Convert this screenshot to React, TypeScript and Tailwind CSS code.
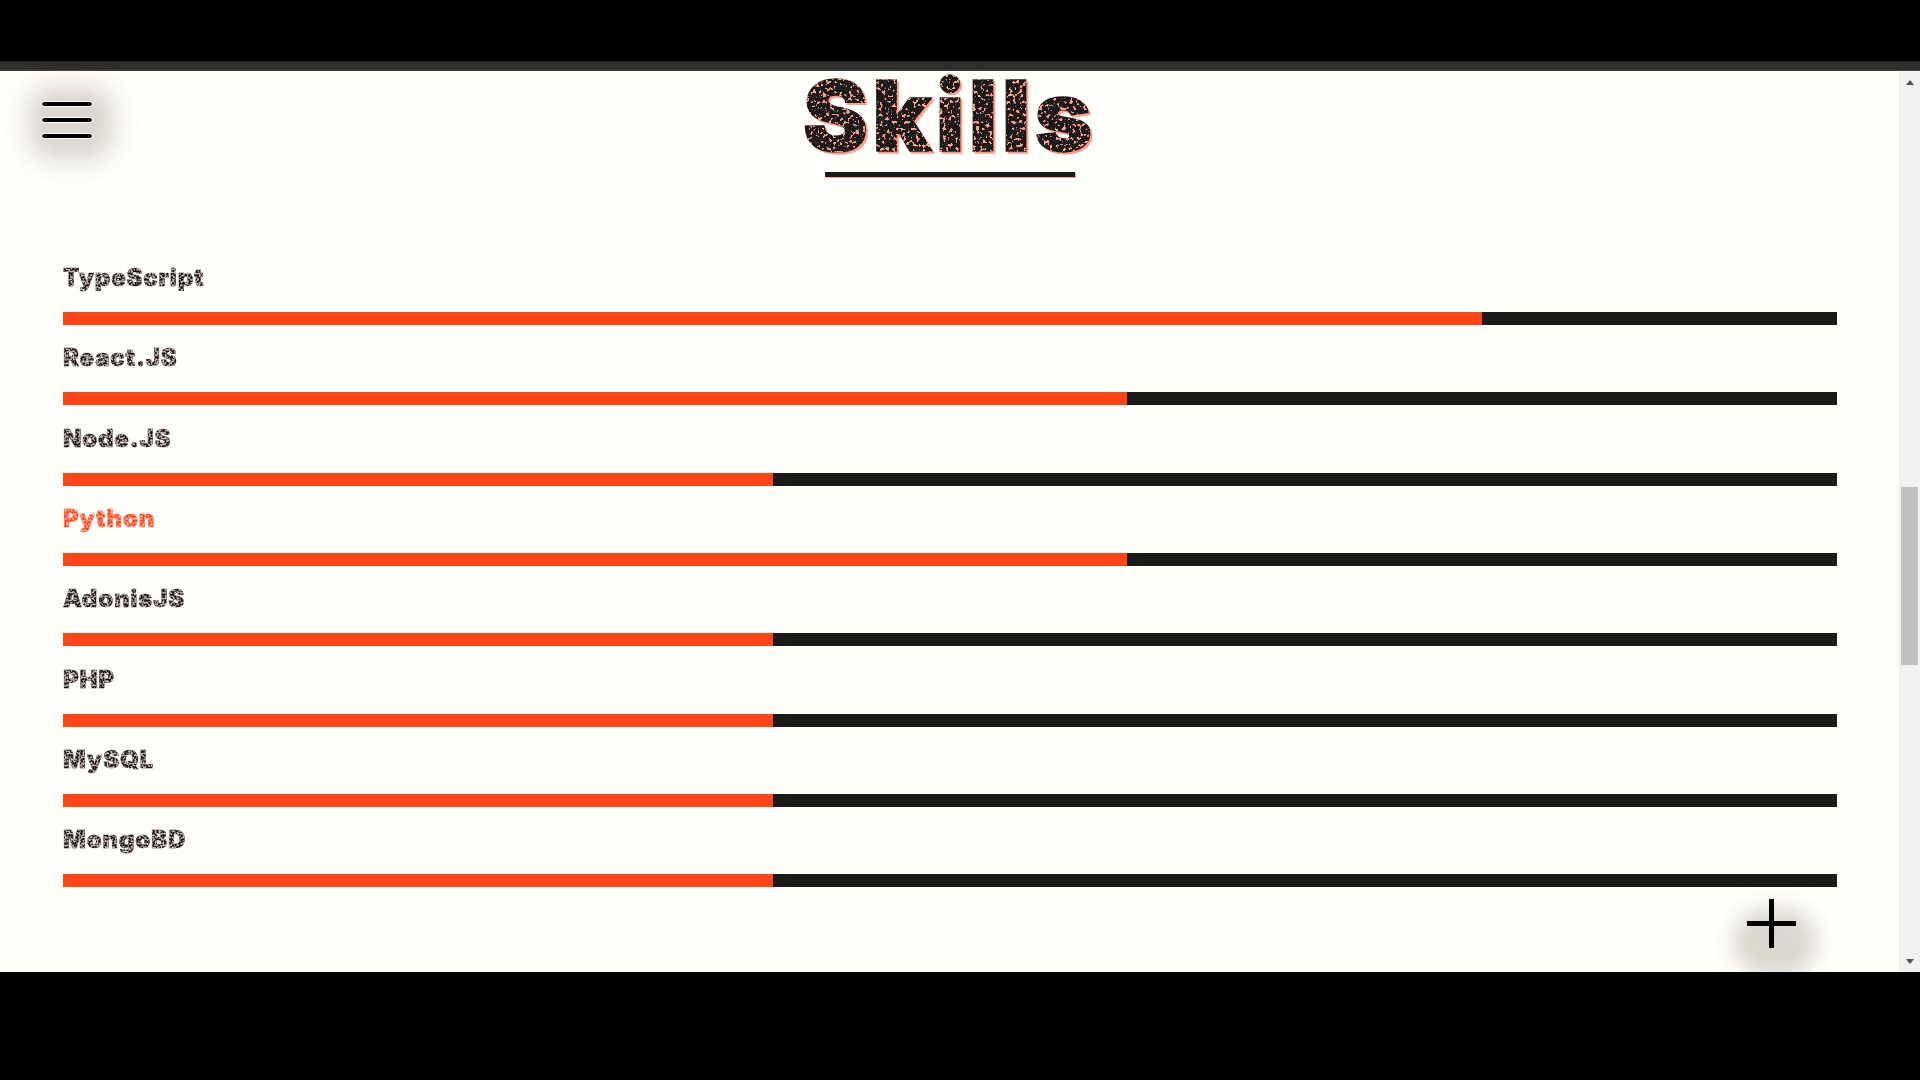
import React from 'react'

type Skill = {
  name: string;
  level: number;
  active?: boolean;
}

const skills: Skill[] = [
  { name: 'TypeScript', level: 80 },
  { name: 'React.JS', level: 60 },
  { name: 'Node.JS', level: 40 },
  { name: 'Python', level: 60, active: true },
  { name: 'AdonisJS', level: 40 },
  { name: 'PHP', level: 40 },
  { name: 'MySQL', level: 40 },
  { name: 'MongoBD', level: 40 },
]

const Filters = () => (
  <svg width="0" height="0" className="absolute" aria-hidden="true">
    <defs>
      <filter id="titleSpeckle" x="-5%" y="-5%" width="110%" height="110%" colorInterpolationFilters="sRGB">
        <feTurbulence type="fractalNoise" baseFrequency="0.3" numOctaves="2" seed="7" result="noise" />
        <feColorMatrix in="noise" type="matrix" values="0 0 0 0 1  0 0 0 0 0.62  0 0 0 0 0.54  0 0 0 14 -8.1" result="dots" />
        <feComposite in="dots" in2="SourceAlpha" operator="in" result="inside" />
        <feOffset in="SourceAlpha" dx="2" dy="2" result="off" />
        <feFlood floodColor="#ff9c8a" />
        <feComposite in2="off" operator="in" result="shadow" />
        <feMerge>
          <feMergeNode in="shadow" />
          <feMergeNode in="SourceGraphic" />
          <feMergeNode in="inside" />
        </feMerge>
      </filter>
      <filter id="labelSpeckle" x="-5%" y="-5%" width="110%" height="110%" colorInterpolationFilters="sRGB">
        <feTurbulence type="fractalNoise" baseFrequency="0.5" numOctaves="2" seed="3" result="noise" />
        <feColorMatrix in="noise" type="matrix" values="0 0 0 0 0.78  0 0 0 0 0.68  0 0 0 0 0.66  0 0 0 14 -6.6" result="dots" />
        <feComposite in="dots" in2="SourceAlpha" operator="in" result="inside" />
        <feMerge>
          <feMergeNode in="SourceGraphic" />
          <feMergeNode in="inside" />
        </feMerge>
      </filter>
      <filter id="activeSpeckle" x="-5%" y="-5%" width="110%" height="110%" colorInterpolationFilters="sRGB">
        <feTurbulence type="fractalNoise" baseFrequency="0.5" numOctaves="2" seed="5" result="noise" />
        <feColorMatrix in="noise" type="matrix" values="0 0 0 0 1  0 0 0 0 0.66  0 0 0 0 0.58  0 0 0 14 -6.6" result="dots" />
        <feComposite in="dots" in2="SourceAlpha" operator="in" result="inside" />
        <feMerge>
          <feMergeNode in="SourceGraphic" />
          <feMergeNode in="inside" />
        </feMerge>
      </filter>
    </defs>
  </svg>
)

const SkillRow = ({ skill }: { skill: Skill }) => (
  <div className="flex flex-col">
    <span
      className={
        skill.active
          ? "text-[24px] leading-[30px] tracking-[0.8px] font-black text-[#ff4419] [-webkit-text-stroke:0.4px_#ff4419] [filter:url(#activeSpeckle)] w-fit"
          : "text-[24px] leading-[30px] tracking-[0.8px] font-black text-[#1b1b1b] [-webkit-text-stroke:0.4px_#1b1b1b] [filter:url(#labelSpeckle)] w-fit"
      }
    >
      {skill.name}
    </span>
    <div className="mt-[19px] h-[13px] bg-[#1b1b1b]">
      <div className="h-full bg-[#ff4419]" style={{ width: `${skill.level}%` }}></div>
    </div>
  </div>
)

const App = () => {
  return (
    <div className="h-screen flex flex-col bg-black overflow-hidden font-['Inter',sans-serif]">
      <Filters />
      <div className="h-[61px] bg-black"></div>
      <div className="h-[10px] bg-[#2e2e2e] border-b border-[#444444]"></div>
      <div className="relative h-[901px] flex overflow-hidden bg-[#fffffb]">
        <main className="flex-1 flex flex-col">
          <div className="flex flex-col items-center">
            <h1 className="text-[98px] leading-[90px] tracking-[4px] font-black text-[#1b1b1b] [-webkit-text-stroke:1.5px_#1b1b1b] [filter:url(#titleSpeckle)]">Skills</h1>
            <div className="mt-[11px] w-[250px] h-[5px] bg-[#1b1b1b] shadow-[1px_1px_0_#ff9c8a]"></div>
          </div>
          <div className="mt-[86px] pl-[63px] pr-[62px] flex flex-col gap-[18.35px]">
            {skills.map((skill) => (
              <SkillRow key={skill.name} skill={skill} />
            ))}
          </div>
        </main>

        <div className="w-[21px] bg-[#f1f1f1] flex flex-col items-center">
          <div className="mt-[9px] w-0 h-0 border-x-[4.5px] border-x-transparent border-b-[5px] border-b-[#505050]"></div>
          <div className="mt-[402px] w-[17px] h-[178px] bg-[#c1c1c1]"></div>
          <div className="mt-[294px] w-0 h-0 border-x-[4.5px] border-x-transparent border-t-[5px] border-t-[#505050]"></div>
        </div>

        <div className="absolute left-[34px] top-[21px] w-[74px] h-[62px] rounded-[22px] bg-[#dcd7d1] shadow-[0_0_22px_14px_rgba(190,180,172,0.3)] blur-[7px]"></div>
        <button type="button" className="absolute left-[42px] top-[31px] w-[50px] h-[36px] flex flex-col justify-between">
          <span className="block h-[4px] bg-black rounded-sm outline outline-[#fffffb]"></span>
          <span className="block h-[4px] bg-black rounded-sm outline outline-[#fffffb]"></span>
          <span className="block h-[4px] bg-black rounded-sm outline outline-[#fffffb]"></span>
        </button>

        <div className="absolute left-[1738px] top-[842px] w-[74px] h-[58px] rounded-[30px] bg-[#dcd7d1] shadow-[0_0_16px_10px_rgba(190,180,172,0.3)] blur-[7px]"></div>
        <button type="button" className="absolute left-[1747px] top-[828px] w-[49px] h-[49px]">
          <span className="absolute left-0 top-[22px] w-[49px] h-[5px] bg-black"></span>
          <span className="absolute left-[22px] top-0 w-[5px] h-[49px] bg-black"></span>
        </button>
      </div>
      <div className="flex-1 bg-black"></div>
    </div>
  )
}

export default App
